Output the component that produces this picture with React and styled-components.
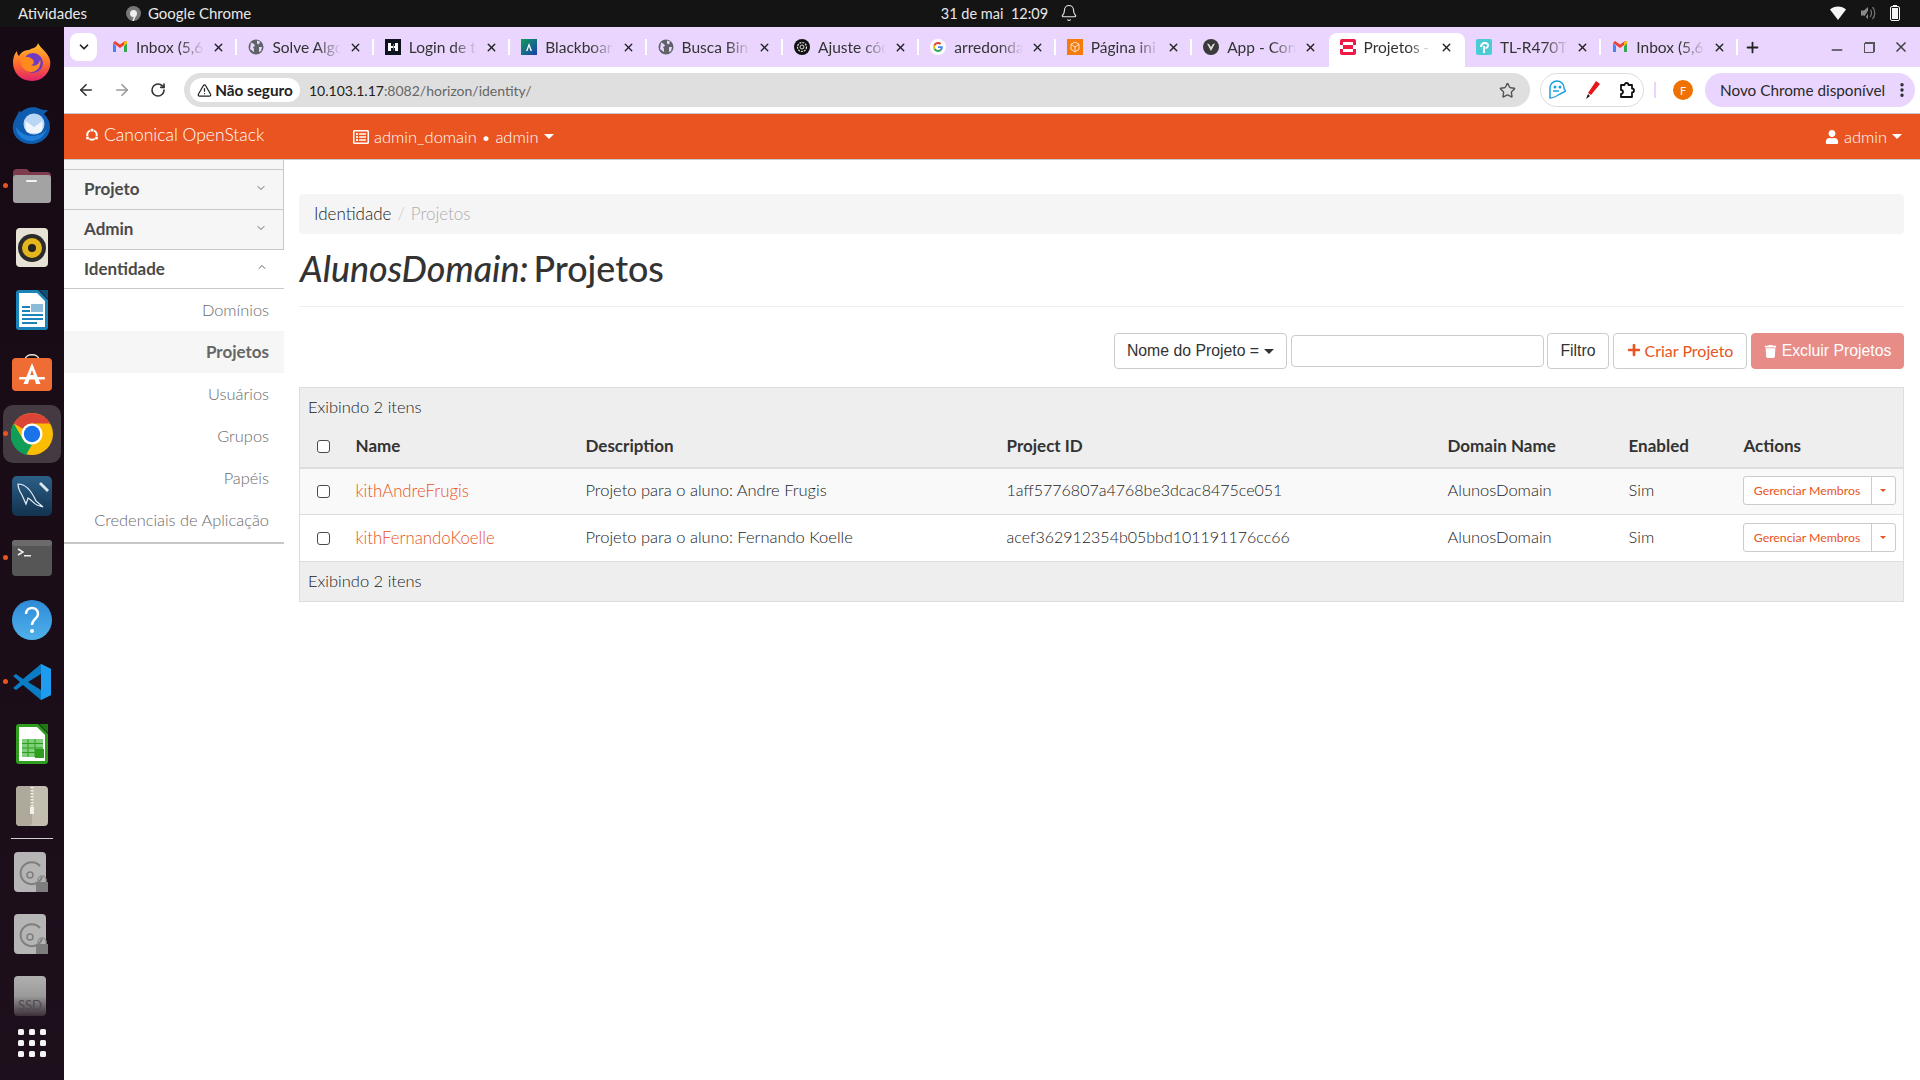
import styled, { createGlobalStyle } from 'styled-components'
import { ArrowLeft, ArrowRight, RotateCw, Star, TriangleAlert, X, Plus, Minus, ChevronDown, ChevronUp, Bell, EllipsisVertical } from 'lucide-react'
import { FaPlus, FaTrash, FaUser, FaRegListAlt } from 'react-icons/fa'

const GlobalStyle = createGlobalStyle`
  html, body { margin: 0; padding: 0; background: #fff; }
  * { box-sizing: border-box; }
  body { font-family: "Lato", "Open Sans", sans-serif; color: #333; }
`

const Screen = styled.div`
  width: 1920px;
  height: 1080px;
  overflow: hidden;
  display: flex;
  flex-direction: column;
`

/* barra do gnome */
const TopBar = styled.div`
  height: 27px;
  flex: none;
  background: #141414;
  color: #e8e8e8;
  font-size: 15px;
  display: grid;
  grid-template-columns: 1fr auto 1fr;
  align-items: center;
  padding: 0 20px 1px 18px;
`
const TopLeft = styled.div`
  display: flex;
  align-items: center;
`
const AppName = styled.div`
  display: flex;
  align-items: center;
  gap: 7px;
  margin-left: 39px;
`
const Clock = styled.div`
  display: flex;
  align-items: center;
  gap: 12px;
  margin-left: 101px;
  font-size: 14.5px;
`
const TopRight = styled.div`
  display: flex;
  justify-content: flex-end;
  align-items: center;
  gap: 14px;
`
const Desktop = styled.div`
  flex: 1;
  display: flex;
  min-height: 0;
`

/* dock */
const Dock = styled.div`
  width: 64px;
  flex: none;
  background: linear-gradient(180deg, #160a14 0%, #1d0f1b 100%);
  padding-top: 4px;
  display: flex;
  flex-direction: column;
`
const DockItem = styled.div`
  position: relative;
  height: 62px;
  flex: none;
  display: flex;
  align-items: center;
  justify-content: center;
  &::before {
    content: '';
    display: ${p => (p.$active ? 'block' : 'none')};
    position: absolute;
    left: 3px;
    right: 3px;
    top: 2px;
    bottom: 2px;
    border-radius: 10px;
    background: #433a42;
  }
  &::after {
    content: '';
    display: ${p => (p.$running ? 'block' : 'none')};
    position: absolute;
    left: 3px;
    top: 28px;
    width: 5px;
    height: 5px;
    border-radius: 50%;
    background: #e95420;
  }
  & > svg { position: relative; z-index: 1; }
`
const DockRule = styled.div`
  height: 1px;
  flex: none;
  margin: 1px 11px 2px;
  background: #cfcfcf;
`
const GridItem = styled.div`
  margin: 2px auto 0;
  width: 28px;
  display: grid;
  grid-template-columns: repeat(3, 6px);
  gap: 5px;
  justify-content: space-between;
`
const GridDot = styled.span`
  width: 6px;
  height: 6px;
  border-radius: 1.5px;
  background: #f4f4f4;
`

const Browser = styled.div`
  flex: 1;
  min-width: 0;
  display: flex;
  flex-direction: column;
`
const TabStrip = styled.div`
  height: 40px;
  flex: none;
  background: #e9d5fd;
  display: flex;
  align-items: flex-end;
  padding-left: 6px;
  position: relative;
`
const TabSearch = styled.div`
  width: 27px;
  height: 28px;
  margin-bottom: 6px;
  margin-right: 4px;
  background: #fff;
  border-radius: 8px;
  display: flex;
  align-items: center;
  justify-content: center;
  color: #222;
`
const Tab = styled.div`
  width: 136.4px;
  height: 34px;
  flex: none;
  display: flex;
  align-items: center;
  padding: 0 12px 6px 11px;
  position: relative;
  font-size: 15.5px;
  color: #333;
  background: ${p => (p.$active ? '#fff' : 'transparent')};
  border-radius: ${p => (p.$active ? '8px 8px 0 0' : '0')};
  &::after {
    content: '';
    display: ${p => (p.$sep ? 'block' : 'none')};
    position: absolute;
    right: 0;
    top: 6px;
    height: 16px;
    width: 2px;
    background: #fff;
  }
`
const TabIcon = styled.span`
  width: 16px;
  height: 16px;
  flex: none;
  margin-right: 8px;
  display: flex;
`
const TabTitle = styled.span`
  flex: 1;
  min-width: 0;
  overflow: hidden;
  white-space: nowrap;
  -webkit-mask-image: linear-gradient(90deg, #000 65%, transparent 100%);
  mask-image: linear-gradient(90deg, #000 65%, transparent 100%);
`
const TabClose = styled.span`
  display: flex;
  margin-left: 8px;
  color: #222;
`
const NewTab = styled.div`
  display: flex;
  align-items: center;
  height: 34px;
  padding-bottom: 6px;
  margin-left: 6px;
  color: #222;
`
const WindowButtons = styled.div`
  margin-left: auto;
  height: 34px;
  display: flex;
  align-items: center;
  gap: 16px;
  padding: 0 11px 6px 0;
  color: #444;
`
const MinimizeIcon = styled(Minus)`
  margin-top: 6px;
`
const Restore = styled.span`
  width: 16px;
  height: 16px;
  position: relative;
  &::before, &::after {
    content: '';
    position: absolute;
    width: 8px;
    height: 8px;
    border: 1.5px solid #555;
  }
  &::before { right: 2px; top: 3px; }
  &::after { left: 3px; bottom: 2px; background: #e9d5fd; }
`

const Toolbar = styled.div`
  height: 46px;
  flex: none;
  background: #fff;
  display: flex;
  align-items: center;
  padding-left: 4px;
`
const NavButton = styled.span`
  width: 36px;
  display: flex;
  justify-content: center;
  color: ${p => (p.$off ? '#9a9a9a' : '#333')};
`
const Omnibox = styled.div`
  width: 1346px;
  height: 34px;
  margin-left: 8px;
  background: #dfdfdf;
  border-radius: 17px;
  display: flex;
  align-items: center;
  padding: 0 14px 0 6px;
`
const SecurityChip = styled.div`
  height: 24px;
  width: 110px;
  flex: none;
  background: #fff;
  border-radius: 12px;
  display: flex;
  align-items: center;
  justify-content: center;
  gap: 3px;
  font-weight: 700;
  font-size: 15.3px;
  color: #222;
`
const Url = styled.div`
  margin-left: 9px;
  color: #222;
  font-size: 14px;
  span { color: #666; }
`
const StarButton = styled.span`
  margin-left: auto;
  display: flex;
  color: #555;
`
const ExtensionPill = styled.div`
  width: 104px;
  height: 34px;
  margin-left: 10px;
  border: 1px solid #dcdcdc;
  border-radius: 17px;
  display: flex;
  align-items: center;
  justify-content: space-between;
  padding: 0 6px 0 7px;
`
const ToolbarRule = styled.span`
  width: 2px;
  height: 16px;
  margin-left: 10px;
  background: #e9d5fd;
`
const Avatar = styled.span`
  width: 20px;
  height: 20px;
  margin-left: 17px;
  border-radius: 50%;
  background: #f07000;
  color: #fff;
  font-size: 11px;
  display: flex;
  align-items: center;
  justify-content: center;
`
const UpdatePill = styled.div`
  width: 210px;
  height: 34px;
  margin-left: 12px;
  background: #e9d5fd;
  border-radius: 17px;
  display: flex;
  align-items: center;
  justify-content: space-between;
  padding: 0 4px 0 15px;
  font-size: 15.3px;
  color: #2a2a2a;
  white-space: nowrap;
`

/* horizon */
const Caret = styled.span`
  width: 0;
  height: 0;
  flex: none;
  border-left: ${p => p.$size}px solid transparent;
  border-right: ${p => p.$size}px solid transparent;
  border-top: ${p => p.$size}px solid currentColor;
`
const NavBar = styled.div`
  height: 47px;
  flex: none;
  background: #e95420;
  border-top: 1px solid #c8c8c8;
  border-bottom: 1px solid #c8c8c8;
  color: #fff;
  font-size: 16.5px;
  font-weight: 300;
  display: flex;
  align-items: center;
  padding: 0 18px 0 21px;
`
const Brand = styled.div`
  display: flex;
  align-items: center;
  gap: 5px;
  font-size: 17.5px;
  width: 268px;
  margin-top: -4px;
`
const NavMenu = styled.div`
  display: flex;
  align-items: center;
  gap: 5px;
`
const UserMenu = styled(NavMenu)`
  margin-left: auto;
`
const Page = styled.div`
  flex: 1;
  min-height: 0;
  display: flex;
`
const Sidebar = styled.div`
  width: 220px;
  flex: none;
`
const SidebarCap = styled.div`
  height: 9px;
  background: #f6f6f6;
  border-right: 1px solid #c8c8c8;
`
const AccordionHead = styled.div`
  height: 40px;
  display: flex;
  align-items: center;
  justify-content: space-between;
  padding: 0 16px 2px 20px;
  font-weight: 700;
  font-size: 17px;
  color: #4a4a4a;
  background: ${p => (p.$open ? '#fff' : '#f6f6f6')};
  border-top: 1px solid #c8c8c8;
  border-right: ${p => (p.$open ? '0' : '1px solid #c8c8c8')};
  border-bottom: ${p => (p.$open ? '1px solid #c8c8c8' : '0')};
  svg { color: #666; margin-top: -2px; }
`
const SubMenu = styled.div`
  border-bottom: 2px solid #c8c8c8;
  padding-bottom: 1px;
`
const SubItem = styled.div`
  height: 42px;
  display: flex;
  align-items: center;
  justify-content: flex-end;
  padding: 0 15px 1px 0;
  font-size: ${p => (p.$active ? 17 : 16.4)}px;
  font-weight: ${p => (p.$active ? 700 : 300)};
  color: ${p => (p.$active ? '#666' : '#6b6b6b')};
  background: ${p => (p.$active ? '#f6f6f6' : 'transparent')};
`
const Content = styled.div`
  flex: 1;
  min-width: 0;
  padding: 34px 16px 0 15px;
`
const Breadcrumb = styled.div`
  height: 40px;
  background: #f5f5f5;
  border-radius: 4px;
  display: flex;
  align-items: center;
  padding: 0 0 2px 15px;
  font-size: 17px;
  font-weight: 300;
  color: #222;
`
const CrumbSep = styled.span`
  color: #ccc;
  margin: 0 6px;
`
const CrumbActive = styled.span`
  color: #aeaeae;
`
const PageHeader = styled.h1`
  margin: 0;
  height: 73px;
  border-bottom: 1px solid #eee;
  display: flex;
  align-items: center;
  font-size: 35.8px;
  font-weight: 500;
  color: #333;
  gap: 5px;
  padding: 0 0 3px 1px;
  em { font-style: italic; }
`
const FilterBar = styled.div`
  height: 80px;
  display: flex;
  justify-content: flex-end;
  align-items: flex-start;
  padding-top: 26px;
`
const Button = styled.div`
  height: 36px;
  display: flex;
  align-items: center;
  justify-content: center;
  gap: ${p => (p.$accent ? 4 : 5)}px;
  padding-bottom: ${p => (p.$accent ? 2 : 0)}px;
  border: 1px solid ${p => (p.$danger ? '#e78c87' : '#ccc')};
  border-radius: 4px;
  background: ${p => (p.$danger ? '#e78c87' : '#fff')};
  color: ${p => (p.$danger ? '#fff' : p.$accent ? '#e95420' : '#333')};
  font-family: ${p => (p.$accent ? '"Lato", sans-serif' : '"Liberation Sans", sans-serif')};
  font-size: ${p => (p.$accent ? 16 : 15.8)}px;
  width: ${p => p.$w}px;
  margin-left: ${p => p.$gap || 0}px;
`
const SearchInput = styled.input`
  width: 253px;
  height: 32px;
  margin: 2px 0 0 4px;
  border: 1px solid #ccc;
  border-radius: 4px;
  background: #fff;
`
const Table = styled.table`
  width: 100%;
  table-layout: fixed;
  border-collapse: collapse;
  border: 1px solid #ddd;
  font-size: 16.5px;
  font-weight: 300;
  col:nth-child(1) { width: 48px; }
  col:nth-child(2) { width: 230px; }
  col:nth-child(3) { width: 421px; }
  col:nth-child(4) { width: 441px; }
  col:nth-child(5) { width: 181px; }
  col:nth-child(6) { width: 115px; }
`
const InfoCell = styled.td`
  height: 40px;
  background: #eee;
  padding: 0 8px 2px;
  color: #222;
`
const Th = styled.th`
  height: 40px;
  background: #eee;
  border-bottom: 2px solid #ddd;
  padding: 0 8px 3px;
  text-align: left;
  font-weight: 700;
  font-size: 17px;
  color: #333;
`
const Td = styled.td`
  height: 47px;
  padding: 0 8px 2px;
  border-bottom: 1px solid #ddd;
  background: ${p => (p.$odd ? '#f9f9f9' : '#fff')};
  color: #222;
`
const IdText = styled.span`
  font-size: 16px;
`
const CheckCell = styled.span`
  display: block;
  width: 13px;
  height: 13px;
  margin: 2px 0 0 9px;
  border: 1.5px solid #4a4a4a;
  border-radius: 3px;
  background: #fff;
`
const ProjectLink = styled.a`
  color: #e95420;
  text-decoration: none;
  font-size: 16.8px;
`
const ActionGroup = styled.div`
  display: flex;
  height: 29px;
  width: 153px;
  margin: 1px 0 0 -1px;
  border: 1px solid #ccc;
  border-radius: 3px;
  color: #e95420;
  background: #fff;
  font-size: 12.3px;
  font-weight: 400;
`
const ActionMain = styled.span`
  width: 128px;
  display: flex;
  align-items: center;
  justify-content: center;
  border-right: 1px solid #ccc;
`
const ActionCaret = styled.span`
  flex: 1;
  display: flex;
  align-items: center;
  justify-content: center;
`

/* favicons */
const Gmail = () => (
  <svg width="16" height="16" viewBox="0 0 16 16">
    <path d="M1 4v9h3V7z" fill="#4285f4" />
    <path d="M12 7v6h3V4z" fill="#34a853" />
    <path d="M1 4l7 5 7-5-2-2-5 3.500L3 2z" fill="#ea4335" />
    <path d="M12 3l3-1v2l-3 3z" fill="#fbbc04" />
  </svg>
)
const Globe = () => (
  <svg width="16" height="16" viewBox="0 0 16 16">
    <circle cx="8" cy="8" r="7.500" fill="#5f6368" />
    <path d="M3 3.500l3 1.500 1 2-2 1 1 2v3l-4-3zM9 1.500l3 1-1 3-2-1zM11 8l3 0-1 4-2 1z" fill="#e9d5fd" />
  </svg>
)
const HackerIcon = () => (
  <svg width="16" height="16" viewBox="0 0 16 16">
    <rect width="16" height="16" fill="#0e141e" />
    <path d="M3 4h3v8H3zM10 4h3v8h-3zM6 7h4v2H6z" fill="#fff" />
    <rect x="8" y="5" width="1" height="6" fill="#1ba94c" />
  </svg>
)
const BlackboardIcon = () => (
  <svg width="16" height="16" viewBox="0 0 16 16">
    <defs>
      <linearGradient id="bb" x1="0" y1="0" x2="1" y2="1">
        <stop offset="0" stopColor="#0f9d58" />
        <stop offset="1" stopColor="#1a3fb0" />
      </linearGradient>
    </defs>
    <rect width="16" height="16" fill="url(#bb)" />
    <path d="M8 4l3 8H9.500L8 7.500 6.500 12H5z" fill="#fff" />
  </svg>
)
const OpenAiIcon = () => (
  <svg width="16" height="16" viewBox="0 0 16 16">
    <circle cx="8" cy="8" r="8" fill="#111" />
    <circle cx="8" cy="8" r="4.500" fill="none" stroke="#ddd" strokeWidth="1.200" strokeDasharray="2 1" />
    <circle cx="8" cy="8" r="2" fill="none" stroke="#ddd" strokeWidth="1" />
  </svg>
)
const GoogleIcon = () => (
  <svg width="16" height="16" viewBox="0 0 16 16">
    <circle cx="8" cy="8" r="8" fill="#fff" />
    <path d="M12.800 8.200c0-.4 0-.7-.1-1H8v1.900h2.700c-.1.600-.5 1.200-1 1.500l1.600 1.200c.9-.9 1.500-2.100 1.500-3.600z" fill="#4285f4" />
    <path d="M8 13c1.300 0 2.400-.4 3.300-1.200l-1.600-1.200c-.4.300-1 .5-1.700.5-1.300 0-2.400-.9-2.800-2L3.600 10.300C4.400 11.900 6.100 13 8 13z" fill="#34a853" />
    <path d="M5.200 9.100c-.2-.7-.2-1.400 0-2L3.600 5.800c-.7 1.400-.7 3 0 4.400z" fill="#fbbc04" />
    <path d="M8 5c.7 0 1.400.3 1.900.7l1.400-1.400C10.400 3.500 9.300 3 8 3 6.100 3 4.400 4.100 3.600 5.800l1.600 1.300C5.600 5.900 6.700 5 8 5z" fill="#ea4335" />
  </svg>
)
const BoxIcon = () => (
  <svg width="16" height="16" viewBox="0 0 16 16">
    <rect width="16" height="16" fill="#f47b0c" />
    <path d="M8 3l4 2.300v5L8 13l-4-2.700v-5zM4 5.300L8 8l4-2.700M8 8v5" fill="none" stroke="#fff" strokeWidth=".8" />
  </svg>
)
const VueDark = () => (
  <svg width="16" height="16" viewBox="0 0 16 16">
    <circle cx="8" cy="8" r="8" fill="#3a3a3a" />
    <path d="M4 4.500l2 .5 2 3 2-3 2-.5-4 7.500z" fill="#ddd" />
  </svg>
)
const OpenStackIcon = () => (
  <svg width="16" height="16" viewBox="0 0 16 16">
    <rect width="16" height="16" rx="2" fill="#ed1944" />
    <rect x="3" y="3" width="10" height="3" fill="#fff" />
    <rect x="3" y="10" width="10" height="3" fill="#fff" />
    <rect x="0" y="6" width="3" height="4" fill="#fff" />
    <rect x="13" y="6" width="3" height="4" fill="#fff" />
  </svg>
)
const TpLinkIcon = () => (
  <svg width="16" height="16" viewBox="0 0 16 16">
    <rect width="16" height="16" rx="2" fill="#4acbd6" />
    <path d="M7 14V7h2v7zM4 8c0-3 2-5 5-5s4 2 4 3.500S11.500 10 9.500 10V8c1 0 1.500-.6 1.500-1.500S10 5 9 5 6 6 6 8z" fill="#fff" />
  </svg>
)

/* icones do dock */
const Firefox = () => (
  <svg width="40" height="40" viewBox="0 0 40 40">
    <defs>
      <linearGradient id="ffa" x1="0" y1="0" x2="0" y2="1">
        <stop offset="0" stopColor="#ffc32e" />
        <stop offset=".55" stopColor="#ff6a2b" />
        <stop offset="1" stopColor="#e0226e" />
      </linearGradient>
    </defs>
    <path d="M26 1c2 5 10 9 12 17 2 10-6 21-18 21S1 30 1 21C1 15 3 11 5 9c0 3 1 4 2 5 2-4 6-6 10-6 3-2 8-2 9-7z" fill="url(#ffa)" />
    <circle cx="21" cy="21" r="10" fill="#6e3bc0" />
    <path d="M8 17c4-3 9-3 12 0 3 2 2 6-1 6 4 2 9-1 9-6 2 6-2 13-9 13-6 0-10-5-11-13z" fill="#ff8a1e" />
  </svg>
)
const Thunderbird = () => (
  <svg width="42" height="42" viewBox="0 0 42 42">
    <path d="M8 8C6 14 1 18 2 27c1 8 9 14 18 14 10 0 19-7 19-17 0-6-3-10-6-13l4-4c-3 0-6 0-8-1C24 3 15 4 10 9z" fill="#0f5cae" />
    <path d="M5 24c0 8 7 14 15 14s14-5 16-12c-4 5-9 7-15 7-6 0-12-3-16-9z" fill="#1f7fd8" />
    <circle cx="23" cy="21" r="10.500" fill="#b9d6f4" />
    <path d="M14.500 18l8.500 6 8.500-6v7.500a5 5 0 0 1-5 4.500h-7a5 5 0 0 1-5-4.500z" fill="#eef5fc" />
  </svg>
)
const Files = () => (
  <svg width="40" height="36" viewBox="0 0 40 36">
    <path d="M1 5a4 4 0 0 1 4-4h10l3 3h17a4 4 0 0 1 4 4v6H1z" fill="#7d3b4e" />
    <rect x="1" y="7" width="38" height="28" rx="3" fill="#a3a3a3" />
    <rect x="14" y="12" width="11" height="2" rx="1" fill="#f2f2f2" />
  </svg>
)
const Rhythmbox = () => (
  <svg width="32" height="40" viewBox="0 0 32 40">
    <rect width="32" height="39" rx="4" fill="#e6e2d5" />
    <circle cx="16" cy="20" r="14" fill="#2b2b2b" />
    <circle cx="16" cy="20" r="10" fill="#e5b51c" />
    <circle cx="16" cy="20" r="4" fill="#222" />
  </svg>
)
const Writer = () => (
  <svg width="32" height="40" viewBox="0 0 32 40">
    <path d="M3 0h19l10 10v27a3 3 0 0 1-3 3H3a3 3 0 0 1-3-3V3a3 3 0 0 1 3-3z" fill="#1a83b8" />
    <path d="M3 3h18l8 8v26H3z" fill="#fff" />
    <path d="M23 0h9v9z" fill="#124f74" />
    <path d="M6 16h8v2H6zM6 20h8v2H6zM6 24h21v2H6zM6 28h21v2H6zM6 32h15v2H6z" fill="#1a83b8" />
    <rect x="15" y="14" width="12" height="8" fill="#8cbbd9" />
  </svg>
)
const Store = () => (
  <svg width="40" height="38" viewBox="0 0 40 38">
    <path d="M13 7c0-7 14-7 14 0" fill="none" stroke="#f0e4d6" strokeWidth="1.500" />
    <rect y="5" width="40" height="33" rx="4" fill="#ef6c35" />
    <path d="M20 10l8.500 21H24l-1.500-5h-5L16 31h-4.500zM18.300 22h3.400L20 17z" fill="#fff" />
    <rect x="7" y="24" width="26" height="2.500" rx="1" fill="#fff" />
  </svg>
)
const ChromeIcon = () => (
  <svg width="42" height="42" viewBox="0 0 42 42">
    <circle cx="21" cy="21" r="21" fill="#fbbc04" />
    <path d="M21 0a21 21 0 0 1 18.200 10.500H21a10.500 10.500 0 0 0-9.100 5.200L2.800 10.500A21 21 0 0 1 21 0z" fill="#db4437" />
    <path d="M2.800 10.500l9.100 15.800a10.500 10.500 0 0 0 9.100 5.200L15 42A21 21 0 0 1 2.800 10.500z" fill="#0f9d58" />
    <circle cx="21" cy="21" r="10.500" fill="#fff" />
    <circle cx="21" cy="21" r="8.200" fill="#1a73e8" />
  </svg>
)
const Workbench = () => (
  <svg width="40" height="40" viewBox="0 0 40 40">
    <defs>
      <linearGradient id="wb" x1="0" y1="0" x2="0" y2="1">
        <stop offset="0" stopColor="#2c5f88" />
        <stop offset="1" stopColor="#12324f" />
      </linearGradient>
    </defs>
    <rect width="40" height="40" rx="5" fill="url(#wb)" />
    <path d="M6 8c8 0 14 8 18 17l7 6-6-2c-3-1-5-5-9-7l-2 6-4-9c-2-3-4-6-4-11z" fill="none" stroke="#e6eef5" strokeWidth="1.200" />
    <path d="M29 6l8 8-2 2-8-8z" fill="#dfe7ee" />
  </svg>
)
const Terminal = () => (
  <svg width="40" height="36" viewBox="0 0 40 36">
    <rect width="40" height="36" rx="4" fill="#565656" />
    <rect width="40" height="6" rx="3" fill="#6b6b6b" />
    <path d="M6 9l5 3-5 3" fill="none" stroke="#eee" strokeWidth="1.500" />
    <rect x="12" y="15" width="7" height="1.500" fill="#eee" />
  </svg>
)
const Help = () => (
  <svg width="40" height="40" viewBox="0 0 40 40">
    <defs>
      <linearGradient id="hp" x1="0" y1="0" x2="0" y2="1">
        <stop offset="0" stopColor="#2f8ad6" />
        <stop offset="1" stopColor="#4fb1ea" />
      </linearGradient>
    </defs>
    <circle cx="20" cy="20" r="20" fill="url(#hp)" />
    <path d="M14 14c0-4 3-6 6-6s6 2 6 6c0 5-6 5-6 11" fill="none" stroke="#fff" strokeWidth="2.500" />
    <circle cx="20" cy="31" r="2" fill="#fff" />
  </svg>
)
const VsCode = () => (
  <svg width="38" height="38" viewBox="0 0 38 38">
    <path d="M28 1l10 5v26l-10 5-18-15-7 5-3-2 7-6-7-6 3-2 7 5z" fill="#0a7cc4" />
    <path d="M28 1l10 5v26l-10 5z" fill="#1f9cf0" />
    <path d="M28 11L15 19l13 8z" fill="#1d1019" />
  </svg>
)
const Calc = () => (
  <svg width="32" height="40" viewBox="0 0 32 40">
    <path d="M3 0h19l10 10v27a3 3 0 0 1-3 3H3a3 3 0 0 1-3-3V3a3 3 0 0 1 3-3z" fill="#2f9e1f" />
    <path d="M3 3h18l8 8v26H3z" fill="#fff" />
    <path d="M23 0h9v9z" fill="#1f7a14" />
    <path d="M6 15h21v18H6z" fill="#7ed07a" />
    <path d="M6 19.500h21M6 24h21M6 28.500h21M12 15v18M19 15v18" stroke="#2f9e1f" strokeWidth="1" />
    <rect x="19" y="25" width="9" height="9" fill="#2f9e1f" />
  </svg>
)
const Archive = () => (
  <svg width="32" height="40" viewBox="0 0 32 40">
    <rect width="32" height="40" rx="4" fill="#c2bdaf" />
    <rect width="16" height="40" rx="4" fill="#aea99a" />
    <path d="M16 1v20" stroke="#f2f0ea" strokeWidth="3" strokeDasharray="1.500 1.500" />
    <rect x="14" y="21" width="4" height="7" fill="#f2f0ea" />
  </svg>
)
const DiskIcon = () => (
  <svg width="36" height="40" viewBox="0 0 36 40">
    <rect width="32" height="40" rx="4" fill="#b5b5b5" />
    <path d="M26 14a11 11 0 1 0 2 11" fill="none" stroke="#7e7e7e" strokeWidth="2" />
    <circle cx="16" cy="23" r="3" fill="none" stroke="#7e7e7e" strokeWidth="1.500" />
    <rect x="22" y="30" width="12" height="10" fill="#7e7e7e" />
    <path d="M24 30v-2a4 4 0 0 1 8 0v2" fill="none" stroke="#8e8e8e" strokeWidth="1.500" />
  </svg>
)
const SsdIcon = () => (
  <svg width="36" height="40" viewBox="0 0 36 40">
    <defs>
      <linearGradient id="sd" x1="0" y1="0" x2="0" y2="1">
        <stop offset="0" stopColor="#b0b0b0" />
        <stop offset=".5" stopColor="#9a9a9a" />
        <stop offset="1" stopColor="#3c3039" />
      </linearGradient>
    </defs>
    <rect width="32" height="40" rx="4" fill="url(#sd)" />
    <text x="4" y="34" fontSize="13" fill="#4f4a4e" fontFamily="Lato">SSD</text>
  </svg>
)
const ChromeMono = () => (
  <svg width="15" height="15" viewBox="0 0 15 15">
    <circle cx="7.500" cy="7.500" r="7.500" fill="#777" />
    <circle cx="7.500" cy="7.500" r="3.500" fill="#eee" />
    <path d="M9 10l-2 5" stroke="#eee" strokeWidth="1.500" />
  </svg>
)
const Wifi = () => (
  <svg width="16" height="14" viewBox="0 0 16 14">
    <path d="M0 3.500C4 -.5 12 -.5 16 3.500L8 14z" fill="#f4f4f4" />
  </svg>
)
const Muted = () => (
  <svg width="16" height="14" viewBox="0 0 16 14">
    <path d="M1 4.500h3L8 1v12L4 9.500H1z" fill="#8a8a8a" />
    <path d="M10 3c2 2 2 6 0 8M12.500 1c3 3 3 9 0 12" fill="none" stroke="#777" strokeWidth="1.200" />
    <path d="M12 0L3 14" stroke="#141414" strokeWidth="1.500" />
  </svg>
)
const Battery = () => (
  <svg width="10" height="16" viewBox="0 0 10 16">
    <rect x="3" width="4" height="2" fill="#f4f4f4" />
    <rect x=".5" y="1.500" width="9" height="14" rx="1.500" fill="#141414" stroke="#f4f4f4" />
    <rect x="2" y="3" width="6" height="11" fill="#f4f4f4" />
  </svg>
)
const Ghost = () => (
  <svg width="18" height="20" viewBox="0 0 18 20">
    <path d="M2 18V8a7 7 0 0 1 14 0c0 2 2 3 2 3l-6 3c-3 2-7 4-10 4z" fill="#fff" stroke="#1a9fe0" strokeWidth="1.500" />
    <circle cx="7" cy="7" r="1.500" fill="#1a9fe0" />
    <circle cx="12" cy="7" r="1.500" fill="#1a9fe0" />
    <path d="M5 11h6" stroke="#1a9fe0" strokeWidth="1.500" />
  </svg>
)
const Marker = () => (
  <svg width="16" height="20" viewBox="0 0 16 20">
    <path d="M11 1l4 3L6 15l-3-2z" fill="#e8161c" />
    <path d="M3 14l2 2-4 3z" fill="#111" />
  </svg>
)
const Puzzle = () => (
  <svg width="18" height="18" viewBox="0 0 18 18">
    <path d="M2 4h3.500a2 2 0 0 1 4 0H13v3.500a2 2 0 0 1 0 4V16H2v-3a2 2 0 0 0 0-4z" fill="none" stroke="#111" strokeWidth="1.800" strokeLinejoin="round" />
  </svg>
)
const Friends = () => (
  <svg width="14" height="14" viewBox="0 0 14 14">
    <circle cx="7" cy="7" r="4.800" fill="none" stroke="#fff" strokeWidth="2" />
    <circle cx="7" cy="2" r="2" fill="#e95420" />
    <circle cx="7" cy="2" r="1.500" fill="#fff" />
    <circle cx="2.500" cy="10" r="2" fill="#e95420" />
    <circle cx="2.500" cy="10" r="1.500" fill="#fff" />
    <circle cx="11.500" cy="10" r="2" fill="#e95420" />
    <circle cx="11.500" cy="10" r="1.500" fill="#fff" />
  </svg>
)

const tabs = [
  { title: 'Inbox (5,6', icon: <Gmail />, sep: true },
  { title: 'Solve Algo', icon: <Globe />, sep: true },
  { title: 'Login de t', icon: <HackerIcon />, sep: true },
  { title: 'Blackboard', icon: <BlackboardIcon />, sep: true },
  { title: 'Busca Bin', icon: <Globe />, sep: true },
  { title: 'Ajuste cód', icon: <OpenAiIcon />, sep: true },
  { title: 'arredonda', icon: <GoogleIcon />, sep: true },
  { title: 'Página ini', icon: <BoxIcon />, sep: true },
  { title: 'App - Con', icon: <VueDark /> },
  { title: 'Projetos -', icon: <OpenStackIcon />, active: true },
  { title: 'TL-R470T', icon: <TpLinkIcon />, sep: true },
  { title: 'Inbox (5,6', icon: <Gmail />, sep: true },
]

const dockApps = [
  { icon: <Firefox /> },
  { icon: <Thunderbird /> },
  { icon: <Files />, running: true },
  { icon: <Rhythmbox /> },
  { icon: <Writer /> },
  { icon: <Store /> },
  { icon: <ChromeIcon />, running: true, active: true },
  { icon: <Workbench /> },
  { icon: <Terminal />, running: true },
  { icon: <Help /> },
  { icon: <VsCode />, running: true },
  { icon: <Calc /> },
  { icon: <Archive /> },
]

const projects = [
  { name: 'kithAndreFrugis', desc: 'Projeto para o aluno: Andre Frugis', id: '1aff5776807a4768be3dcac8475ce051' },
  { name: 'kithFernandoKoelle', desc: 'Projeto para o aluno: Fernando Koelle', id: 'acef362912354b05bbd101191176cc66' },
]

const subItems = ['Domínios', 'Projetos', 'Usuários', 'Grupos', 'Papéis', 'Credenciais de Aplicação']

export default function App() {
  return (
    <Screen>
      <GlobalStyle />
      <TopBar>
        <TopLeft>
          Atividades
          <AppName><ChromeMono /> Google Chrome</AppName>
        </TopLeft>
        <Clock>31 de mai&nbsp;&nbsp;12:09 <Bell size={18} strokeWidth={1.5} /></Clock>
        <TopRight><Wifi /><Muted /><Battery /></TopRight>
      </TopBar>
      <Desktop>
        <Dock>
          {dockApps.map((app, i) => (
            <DockItem key={i} $active={app.active} $running={app.running}>{app.icon}</DockItem>
          ))}
          <DockRule />
          <DockItem><DiskIcon /></DockItem>
          <DockItem><DiskIcon /></DockItem>
          <DockItem><SsdIcon /></DockItem>
          <GridItem>
            {Array.from({ length: 9 }).map((_, i) => <GridDot key={i} />)}
          </GridItem>
        </Dock>
        <Browser>
          <TabStrip>
            <TabSearch><ChevronDown size={14} strokeWidth={3} /></TabSearch>
            {tabs.map((t, i) => (
              <Tab key={i} $active={t.active} $sep={t.sep}>
                <TabIcon>{t.icon}</TabIcon>
                <TabTitle>{t.title}</TabTitle>
                <TabClose><X size={13} strokeWidth={2.5} /></TabClose>
              </Tab>
            ))}
            <NewTab><Plus size={17} strokeWidth={2.5} /></NewTab>
            <WindowButtons>
              <MinimizeIcon size={16} strokeWidth={2.5} />
              <Restore />
              <X size={16} strokeWidth={2.5} />
            </WindowButtons>
          </TabStrip>
          <Toolbar>
            <NavButton><ArrowLeft size={18} strokeWidth={2.2} /></NavButton>
            <NavButton $off><ArrowRight size={18} strokeWidth={2.2} /></NavButton>
            <NavButton><RotateCw size={16} strokeWidth={2.4} /></NavButton>
            <Omnibox>
              <SecurityChip><TriangleAlert size={15} strokeWidth={2} /> Não seguro</SecurityChip>
              <Url>10.103.1.17<span>:8082/horizon/identity/</span></Url>
              <StarButton><Star size={17} strokeWidth={2} /></StarButton>
            </Omnibox>
            <ExtensionPill><Ghost /><Marker /><Puzzle /></ExtensionPill>
            <ToolbarRule />
            <Avatar>F</Avatar>
            <UpdatePill>Novo Chrome disponível <EllipsisVertical size={18} strokeWidth={2.5} /></UpdatePill>
          </Toolbar>
          <NavBar>
            <Brand><Friends /> Canonical OpenStack</Brand>
            <NavMenu><FaRegListAlt size={16} /> admin_domain • admin <Caret $size={5} /></NavMenu>
            <UserMenu><FaUser size={14} /> admin <Caret $size={5} /></UserMenu>
          </NavBar>
          <Page>
            <Sidebar>
              <SidebarCap />
              <AccordionHead>Projeto <ChevronDown size={12} /></AccordionHead>
              <AccordionHead>Admin <ChevronDown size={12} /></AccordionHead>
              <AccordionHead $open>Identidade <ChevronUp size={12} /></AccordionHead>
              <SubMenu>
                {subItems.map(s => <SubItem key={s} $active={s === 'Projetos'}>{s}</SubItem>)}
              </SubMenu>
            </Sidebar>
            <Content>
              <Breadcrumb>Identidade<CrumbSep>/</CrumbSep><CrumbActive>Projetos</CrumbActive></Breadcrumb>
              <PageHeader><em>AlunosDomain:</em> Projetos</PageHeader>
              <FilterBar>
                <Button $w={173}>Nome do Projeto = <Caret $size={5} /></Button>
                <SearchInput />
                <Button $w={62} $gap={3}>Filtro</Button>
                <Button $w={134} $gap={4} $accent><FaPlus size={14} /> Criar Projeto</Button>
                <Button $w={153} $gap={4} $danger><FaTrash size={13} /> Excluir Projetos</Button>
              </FilterBar>
              <Table>
                <colgroup><col /><col /><col /><col /><col /><col /><col /></colgroup>
                <thead>
                  <tr><InfoCell colSpan={7}>Exibindo 2 itens</InfoCell></tr>
                  <tr>
                    <Th><CheckCell /></Th>
                    <Th>Name</Th>
                    <Th>Description</Th>
                    <Th>Project ID</Th>
                    <Th>Domain Name</Th>
                    <Th>Enabled</Th>
                    <Th>Actions</Th>
                  </tr>
                </thead>
                <tbody>
                  {projects.map((p, i) => (
                    <tr key={p.id}>
                      <Td $odd={i === 0}><CheckCell /></Td>
                      <Td $odd={i === 0}><ProjectLink>{p.name}</ProjectLink></Td>
                      <Td $odd={i === 0}>{p.desc}</Td>
                      <Td $odd={i === 0}><IdText>{p.id}</IdText></Td>
                      <Td $odd={i === 0}>AlunosDomain</Td>
                      <Td $odd={i === 0}>Sim</Td>
                      <Td $odd={i === 0}>
                        <ActionGroup>
                          <ActionMain>Gerenciar Membros</ActionMain>
                          <ActionCaret><Caret $size={3.5} /></ActionCaret>
                        </ActionGroup>
                      </Td>
                    </tr>
                  ))}
                </tbody>
                <tfoot>
                  <tr><InfoCell colSpan={7}>Exibindo 2 itens</InfoCell></tr>
                </tfoot>
              </Table>
            </Content>
          </Page>
        </Browser>
      </Desktop>
    </Screen>
  )
}
